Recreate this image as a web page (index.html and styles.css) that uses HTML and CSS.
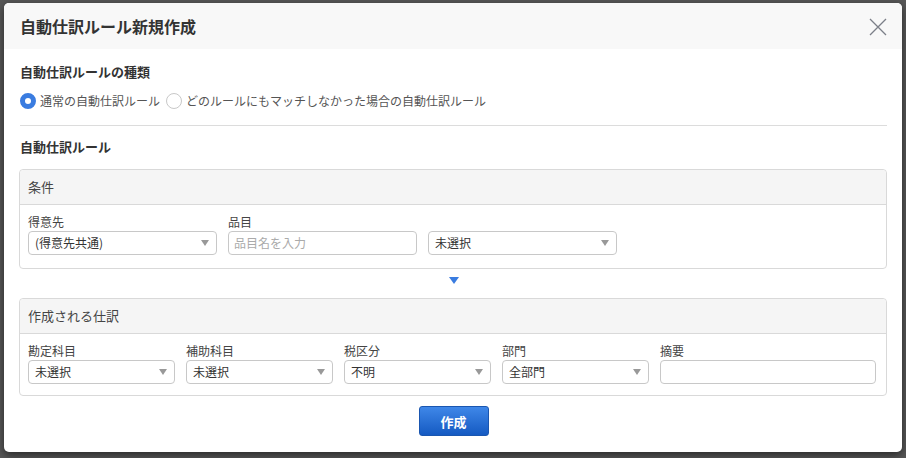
FILE: index.html
```html
<!DOCTYPE html>
<html lang="ja">
<head>
<meta charset="utf-8">
<title>自動仕訳ルール新規作成</title>
<link rel="stylesheet" href="styles.css">
</head>
<body>
<div class="modal">
  <div class="modal-header">
    <h1 class="modal-title">自動仕訳ルール新規作成</h1>
    <svg class="close" width="18" height="18" viewBox="0 0 18 18"><path d="M1 1 L17 17 M17 1 L1 17" stroke="#7c7f88" stroke-width="1.3" fill="none"/></svg>
  </div>
  <div class="modal-body">
    <div class="section-title first">自動仕訳ルールの種類</div>
    <div class="radio-row">
      <label class="radio"><span class="radio-dot checked"></span>通常の自動仕訳ルール</label>
      <label class="radio"><span class="radio-dot"></span>どのルールにもマッチしなかった場合の自動仕訳ルール</label>
    </div>
    <div class="divider"></div>
    <div class="section-title">自動仕訳ルール</div>

    <div class="panel">
      <div class="panel-header">条件</div>
      <div class="panel-body">
        <div class="field w-189">
          <div class="field-label">得意先</div>
          <div class="select"><span>(得意先共通)</span><i class="caret"></i></div>
        </div>
        <div class="field w-189">
          <div class="field-label">品目</div>
          <div class="input placeholder">品目名を入力</div>
        </div>
        <div class="field w-189">
          <div class="field-label">&nbsp;</div>
          <div class="select"><span>未選択</span><i class="caret"></i></div>
        </div>
      </div>
    </div>

    <div class="arrow-row"><i class="arrow-down"></i></div>

    <div class="panel panel-result">
      <div class="panel-header">作成される仕訳</div>
      <div class="panel-body">
        <div class="field w-147">
          <div class="field-label">勘定科目</div>
          <div class="select"><span>未選択</span><i class="caret"></i></div>
        </div>
        <div class="field w-147">
          <div class="field-label">補助科目</div>
          <div class="select"><span>未選択</span><i class="caret"></i></div>
        </div>
        <div class="field w-147">
          <div class="field-label">税区分</div>
          <div class="select"><span>不明</span><i class="caret"></i></div>
        </div>
        <div class="field w-147">
          <div class="field-label">部門</div>
          <div class="select"><span>全部門</span><i class="caret"></i></div>
        </div>
        <div class="field w-216">
          <div class="field-label">摘要</div>
          <div class="input"></div>
        </div>
      </div>
    </div>

    <div class="actions">
      <button class="btn-primary">作成</button>
    </div>
  </div>
</div>
</body>
</html>
```

FILE: styles.css
```css
* { box-sizing: border-box; }
html, body { margin: 0; padding: 0; }
body {
  width: 906px;
  height: 458px;
  background: #575757;
  font-family: "Noto Sans CJK JP", "Noto Sans", "Liberation Sans", sans-serif;
  color: #333;
  overflow: hidden;
  padding: 3px 4px 0 4px;
}
.modal {
  width: 898px;
  height: 449px;
  background: #fff;
  border-radius: 5px;
  overflow: hidden;
  box-shadow: 0 3px 8px rgba(0,0,0,0.55);
}
.modal-header {
  height: 46px;
  background: #f8f8f8;
  display: flex;
  align-items: center;
  justify-content: space-between;
  padding: 0 15px 0 16px;
}
.modal-title {
  margin: 0;
  font-size: 16px;
  font-weight: bold;
  color: #333;
  line-height: 20px;
}
.close { display: block; margin-top: 1px; }
.modal-body {
  padding: 0 15px 0 15px;
}
.section-title {
  font-size: 13px;
  font-weight: bold;
  line-height: 20px;
  color: #333;
  padding-left: 1px;
  margin-top: 11px;
}
.section-title.first { margin-top: 13px; }
.radio-row {
  display: flex;
  align-items: center;
  gap: 6px;
  margin-top: 9px;
  padding-left: 1px;
  height: 20px;
}
.radio {
  display: flex;
  align-items: center;
  font-size: 12px;
  color: #555;
  line-height: 20px;
}
.radio-dot {
  width: 16px;
  height: 16px;
  border-radius: 50%;
  border: 1px solid #c8c8c8;
  background: #fff;
  margin-right: 4px;
  flex: none;
}
.radio-dot.checked {
  border: 5px solid #3a7ce0;
  background: #fff;
}
.divider {
  height: 1px;
  background: #dcdcdc;
  margin: 14px 0 0 1px;
}
.panel {
  border: 1px solid #d9d9d9;
  border-radius: 4px;
  margin-top: 12px;
}
.panel-header {
  height: 35px;
  background: #f5f5f5;
  border-bottom: 1px solid #d9d9d9;
  border-radius: 4px 4px 0 0;
  font-size: 13px;
  line-height: 33px;
  padding-left: 8px;
  color: #444;
}
.panel-body {
  display: flex;
  gap: 11px;
  padding: 7px 8px 13px 8px;
}
.panel-result .panel-body { padding-bottom: 11px; }
.field { flex: none; }
.w-189 { width: 189px; }
.w-147 { width: 147px; }
.w-216 { width: 216px; }
.field-label {
  font-size: 12px;
  line-height: 19px;
  color: #444;
}
.select, .input {
  height: 24px;
  border: 1px solid #c8c8c8;
  border-radius: 4px;
  background: #fff;
  font-size: 12px;
  line-height: 22px;
  padding: 0 6px 0 6px;
  color: #333;
  display: flex;
  align-items: center;
  justify-content: space-between;
}
.input.placeholder { color: #aaa; padding-left: 5px; }
.caret {
  width: 0;
  height: 0;
  border-left: 4px solid transparent;
  border-right: 4px solid transparent;
  border-top: 6px solid #999;
  margin-right: 1px;
}
.arrow-row {
  height: 29px;
  display: flex;
  align-items: flex-start;
  justify-content: center;
  padding-top: 8px;
}
.arrow-row + .panel { margin-top: 0; }
.arrow-down {
  width: 0;
  height: 0;
  border-left: 5px solid transparent;
  border-right: 5px solid transparent;
  border-top: 7px solid #3a7ce0;
  margin-left: 1px;
}
.actions {
  display: flex;
  justify-content: center;
  margin-top: 10px;
}
.btn-primary {
  width: 70px;
  height: 30px;
  border: 1px solid #1a56b0;
  border-radius: 3px;
  background: linear-gradient(#3f87e8, #155ac2);
  color: #fff;
  font-family: inherit;
  font-size: 13px;
  font-weight: bold;
  padding: 0;
  margin-left: 1px;
}
```
